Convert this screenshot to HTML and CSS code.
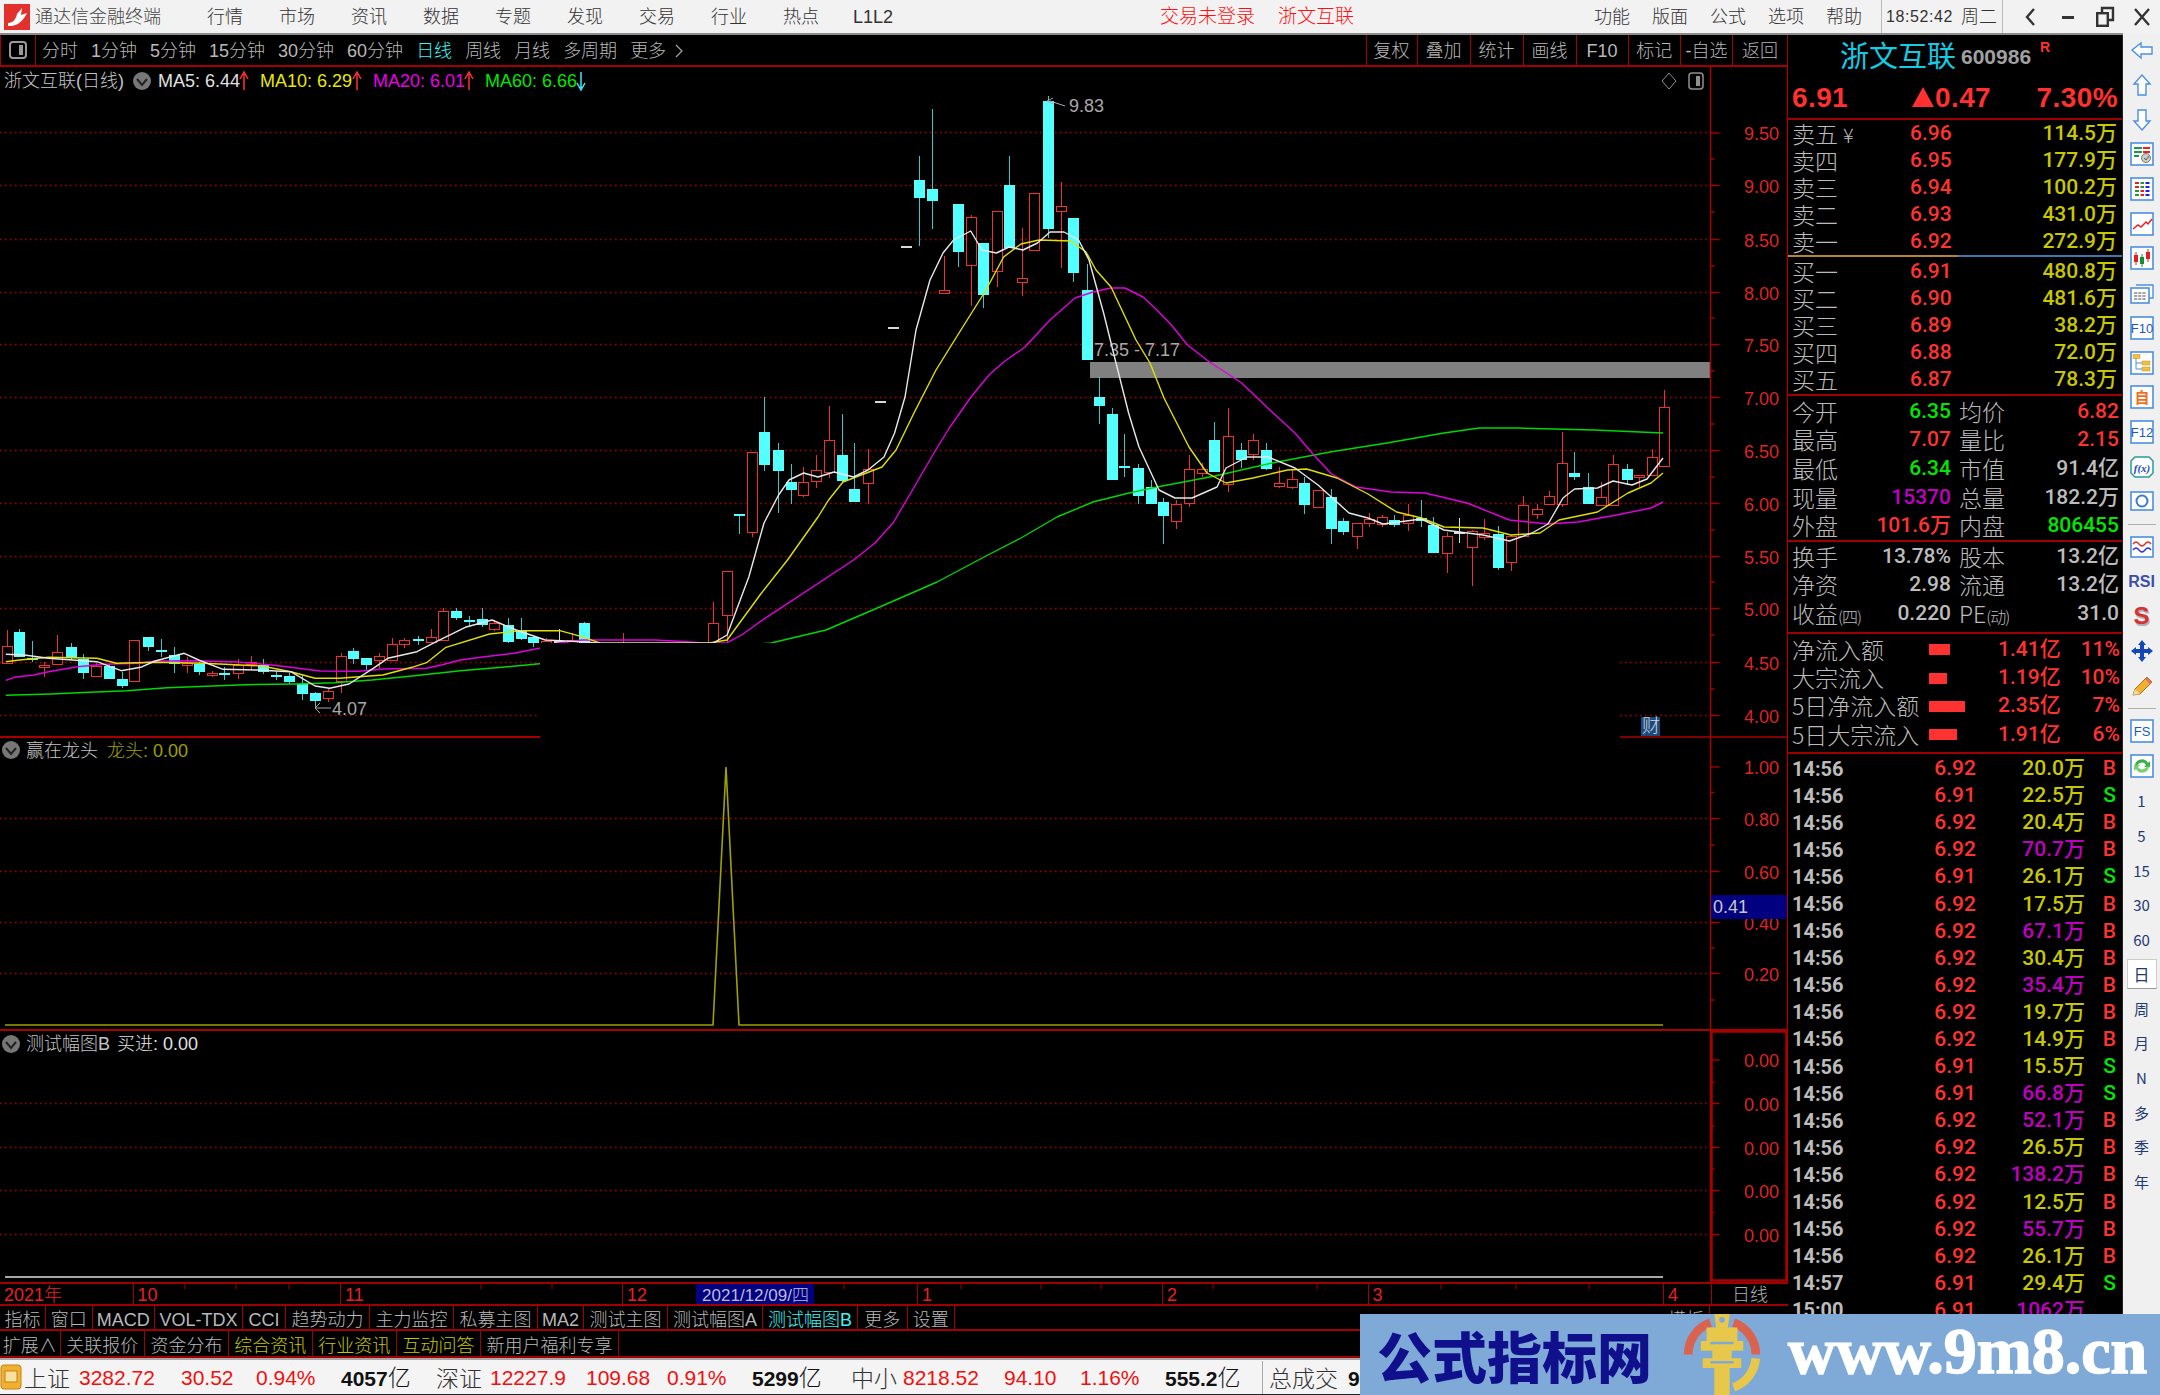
FILE: index.html
```html
<!DOCTYPE html>
<html lang="zh">
<head>
<meta charset="utf-8">
<title>通达信金融终端</title>
<link rel="stylesheet" href="styles.css">
</head>
<body>
<div class="app">
  <header class="titlebar">
    <svg class="logo" viewBox="0 0 26 26"><rect width="26" height="26" fill="#e2302c"/><path d="M4 19 C9 19 12 15 13 10 L18 4 L17 11 L23 9 C19 17 13 23 4 22Z" fill="#fff"/></svg>
    <span class="appname">通达信金融终端</span>
    <nav class="menu"><span>行情</span><span>市场</span><span>资讯</span><span>数据</span><span>专题</span><span>发现</span><span>交易</span><span>行业</span><span>热点</span><span>L1L2</span></nav>
    <span class="warn">交易未登录</span><span class="warn warn2">浙文互联</span>
    <nav class="menu2"><span>功能</span><span>版面</span><span>公式</span><span>选项</span><span>帮助</span></nav>
    <div class="clock"><span class="clocktime">18:52:42</span><span>周二</span></div>
    <div class="winbtns">
      <svg viewBox="0 0 24 24"><path d="M15 4 L8 12 L15 20" fill="none" stroke="#333" stroke-width="2.4"/></svg>
      <svg viewBox="0 0 24 24"><rect x="6" y="11" width="12" height="3" fill="#333"/></svg>
      <svg viewBox="0 0 24 24"><path d="M9 7 V3 H20 V15 H16" fill="none" stroke="#333" stroke-width="2.4"/><rect x="4.2" y="8.2" width="10.6" height="12.6" fill="none" stroke="#333" stroke-width="2.4"/></svg>
      <svg viewBox="0 0 24 24"><path d="M5 4 L19 20 M19 4 L5 20" stroke="#333" stroke-width="2.4"/></svg>
    </div>
  </header>

  <div class="main">
    <section class="left">
      <div class="toolbar">
        <div class="paneltoggle"><svg viewBox="0 0 20 20"><rect x="2" y="2" width="16" height="16" rx="3" fill="none" stroke="#9a9a9a" stroke-width="2"/><rect x="11" y="5" width="4" height="10" fill="#9a9a9a"/></svg></div>
        <nav class="periods"><span>分时</span><span>1分钟</span><span>5分钟</span><span>15分钟</span><span>30分钟</span><span>60分钟</span><span class="on">日线</span><span>周线</span><span>月线</span><span>多周期</span><span>更多</span><svg class="morearrow" viewBox="0 0 8 16"><path d="M1 2 L7 8 L1 14" fill="none" stroke="#a8a8a8" stroke-width="1.2"/></svg></nav>
        <nav class="tools"><span>复权</span><span>叠加</span><span>统计</span><span>画线</span><span>F10</span><span>标记</span><span>-自选</span><span>返回</span></nav>
      </div>

      <svg id="chart" class="chart" viewBox="0 67 1788 1215" xmlns="http://www.w3.org/2000/svg">
        <g id="grid"></g>
        <rect x="1090" y="362" width="620" height="16" fill="#808080"/>
        <text class="t grey" x="1094" y="356">7.35 - 7.17</text>
        <g id="candles"></g>
        <g id="lines"></g>
        <rect x="540" y="643" width="1080" height="98" fill="#000"/>
        <text class="t grey" x="1069" y="112">9.83</text>
        <path d="M1065 106 L1050 101 M1053 98 L1047 101 L1053 104" fill="none" stroke="#a8a8a8"/>
        <text class="t grey" x="332" y="715">4.07</text>
        <path d="M331 708 H315 M320 703 L315 708 L320 713" fill="none" stroke="#a8a8a8"/>

        <g id="frame"></g>
        <text class="t" fill="#c4c4c4" x="4" y="87">浙文互联(日线)</text>
        <circle cx="142" cy="81" r="9" fill="#777"/><path d="M137 79 L142 85 L147 79" fill="none" stroke="#222" stroke-width="2"/>
        <text class="t" fill="#e0e0e0" x="158" y="87">MA5: 6.44</text>
        <path d="M244 90 V74 M240 79 L244 72 L248 79" fill="none" stroke="#ff3030" stroke-width="1.5"/>
        <text class="t" fill="#e8e800" x="260" y="87">MA10: 6.29</text>
        <path d="M357 90 V74 M353 79 L357 72 L361 79" fill="none" stroke="#ff3030" stroke-width="1.5"/>
        <text class="t" fill="#e800e8" x="373" y="87">MA20: 6.01</text>
        <path d="M469 90 V74 M465 79 L469 72 L473 79" fill="none" stroke="#ff3030" stroke-width="1.5"/>
        <text class="t" fill="#00e800" x="485" y="87">MA60: 6.66</text>
        <path d="M581 72 V88 M577 83 L581 90 L585 83" fill="none" stroke="#40e8ff" stroke-width="1.5"/>
        <path d="M1669 73 L1676 81 L1669 89 L1662 81Z" fill="none" stroke="#909090"/>
        <rect x="1689" y="73" width="14" height="16" rx="3" fill="none" stroke="#909090" stroke-width="1.5"/><rect x="1696" y="76" width="4" height="10" fill="#909090"/>

        <rect x="1641" y="717" width="19" height="19" fill="#1a4a80"/>
        <text class="t" fill="#d8d8d8" x="1642" y="732" font-size="17">财</text>

        <circle cx="11" cy="750" r="9" fill="#777"/><path d="M6 748 L11 754 L16 748" fill="none" stroke="#222" stroke-width="2"/>
        <text class="t" fill="#c4c4c4" x="26" y="757">赢在龙头</text>
        <text class="t" fill="#a0a000" x="107" y="757">龙头: 0.00</text>
        <circle cx="11" cy="1044" r="9" fill="#777"/><path d="M6 1042 L11 1048 L16 1042" fill="none" stroke="#222" stroke-width="2"/>
        <text class="t" fill="#c4c4c4" x="26" y="1050">测试幅图B</text>
        <text class="t" fill="#e0e0e0" x="117" y="1050">买进: 0.00</text>

        <g id="axis"></g>
        <rect x="1711" y="895" width="76" height="24" fill="#000080"/>
        <text class="t" fill="#c8c8c8" x="1713" y="913">0.41</text>
      </svg>

      <div class="timeaxis">
        <svg class="timeticks" viewBox="0 0 1710 5"><path d="M185 0v5M236 0v5M289 0v5M481 0v5M552 0v5M844 0v5M961 0v5M1041 0v5M1101 0v5M1213 0v5M1317 0v5M1441 0v5M1516 0v5M1589 0v5" stroke="#a00000"/></svg>
        <span>2021年</span><span>10</span><span>11</span><span>12</span><span class="cursor">2021/12/09/四</span><span class="blank"></span><span>1</span><span>2</span><span>3</span><span>4</span><span class="period">日线</span>
      </div>
      <div class="tabs tabs1"><span>指标</span><span>窗口</span><span>MACD</span><span>VOL-TDX</span><span>CCI</span><span>趋势动力</span><span>主力监控</span><span>私募主图</span><span>MA2</span><span>测试主图</span><span>测试幅图A</span><span class="on">测试幅图B</span><span>更多</span><span>设置</span><span class="blank"></span><span>模板</span><span class="blank"></span></div>
      <div class="tabs tabs2"><span>扩展∧</span><span>关联报价</span><span>资金分布</span><span class="gold">综合资讯</span><span class="gold">行业资讯</span><span class="gold">互动问答</span><span>新用户福利专享</span><span class="blank"></span></div>
    </section>

    <aside class="quote">
      <div class="qhead">
        <div class="qname"><span class="qcn">浙文互联</span><span class="qcode">600986</span><sup class="qr">R</sup></div>
        <div class="qprice"><span>6.91</span><span class="qchg"><i class="tri"></i>0.47</span><span class="qpct">7.30%</span></div>
      </div>
      <div class="book asks">
        <div class="brow"><span class="lab">卖五 <small>¥</small></span><span class="red">6.96</span><span class="yel">114.5万</span></div>
        <div class="brow"><span class="lab">卖四</span><span class="red">6.95</span><span class="yel">177.9万</span></div>
        <div class="brow"><span class="lab">卖三</span><span class="red">6.94</span><span class="yel">100.2万</span></div>
        <div class="brow"><span class="lab">卖二</span><span class="red">6.93</span><span class="yel">431.0万</span></div>
        <div class="brow"><span class="lab">卖一</span><span class="red">6.92</span><span class="yel">272.9万</span></div>
      </div>
      <div class="book bids">
        <div class="brow"><span class="lab">买一</span><span class="red">6.91</span><span class="yel">480.8万</span></div>
        <div class="brow"><span class="lab">买二</span><span class="red">6.90</span><span class="yel">481.6万</span></div>
        <div class="brow"><span class="lab">买三</span><span class="red">6.89</span><span class="yel">38.2万</span></div>
        <div class="brow"><span class="lab">买四</span><span class="red">6.88</span><span class="yel">72.0万</span></div>
        <div class="brow"><span class="lab">买五</span><span class="red">6.87</span><span class="yel">78.3万</span></div>
      </div>
      <div class="stats stats1">
        <div class="srow"><span class="lab">今开</span><span class="grn">6.35</span><span class="lab">均价</span><span class="red">6.82</span></div>
        <div class="srow"><span class="lab">最高</span><span class="red">7.07</span><span class="lab">量比</span><span class="red">2.15</span></div>
        <div class="srow"><span class="lab">最低</span><span class="grn">6.34</span><span class="lab">市值</span><span class="gry">91.4亿</span></div>
        <div class="srow"><span class="lab">现量</span><span class="pur">15370</span><span class="lab">总量</span><span class="gry">182.2万</span></div>
        <div class="srow"><span class="lab">外盘</span><span class="red">101.6万</span><span class="lab">内盘</span><span class="grn">806455</span></div>
      </div>
      <div class="stats stats2">
        <div class="srow"><span class="lab">换手</span><span class="gry">13.78%</span><span class="lab">股本</span><span class="gry">13.2亿</span></div>
        <div class="srow"><span class="lab">净资</span><span class="gry">2.98</span><span class="lab">流通</span><span class="gry">13.2亿</span></div>
        <div class="srow"><span class="lab">收益<small class="paren">(四)</small></span><span class="gry">0.220</span><span class="lab">PE<small class="paren">(动)</small></span><span class="gry">31.0</span></div>
      </div>
      <div class="flow">
        <div class="frow"><span class="lab">净流入额<i class="bar" style="width:21px"></i></span><span class="red">1.41亿</span><span class="red">11%</span></div>
        <div class="frow"><span class="lab">大宗流入<i class="bar" style="width:18px"></i></span><span class="red">1.19亿</span><span class="red">10%</span></div>
        <div class="frow"><span class="lab">5日净流入额<i class="bar" style="width:36px"></i></span><span class="red">2.35亿</span><span class="red">7%</span></div>
        <div class="frow"><span class="lab">5日大宗流入<i class="bar" style="width:28px"></i></span><span class="red">1.91亿</span><span class="red">6%</span></div>
      </div>
      <div class="ticks">
        <div class="trow"><span>14:56</span><span class="red">6.92</span><span class="yel">20.0万</span><span class="red">B</span></div>
        <div class="trow"><span>14:56</span><span class="red">6.91</span><span class="yel">22.5万</span><span class="grn">S</span></div>
        <div class="trow"><span>14:56</span><span class="red">6.92</span><span class="yel">20.4万</span><span class="red">B</span></div>
        <div class="trow"><span>14:56</span><span class="red">6.92</span><span class="pur">70.7万</span><span class="red">B</span></div>
        <div class="trow"><span>14:56</span><span class="red">6.91</span><span class="yel">26.1万</span><span class="grn">S</span></div>
        <div class="trow"><span>14:56</span><span class="red">6.92</span><span class="yel">17.5万</span><span class="red">B</span></div>
        <div class="trow"><span>14:56</span><span class="red">6.92</span><span class="pur">67.1万</span><span class="red">B</span></div>
        <div class="trow"><span>14:56</span><span class="red">6.92</span><span class="yel">30.4万</span><span class="red">B</span></div>
        <div class="trow"><span>14:56</span><span class="red">6.92</span><span class="pur">35.4万</span><span class="red">B</span></div>
        <div class="trow"><span>14:56</span><span class="red">6.92</span><span class="yel">19.7万</span><span class="red">B</span></div>
        <div class="trow"><span>14:56</span><span class="red">6.92</span><span class="yel">14.9万</span><span class="red">B</span></div>
        <div class="trow"><span>14:56</span><span class="red">6.91</span><span class="yel">15.5万</span><span class="grn">S</span></div>
        <div class="trow"><span>14:56</span><span class="red">6.91</span><span class="pur">66.8万</span><span class="grn">S</span></div>
        <div class="trow"><span>14:56</span><span class="red">6.92</span><span class="pur">52.1万</span><span class="red">B</span></div>
        <div class="trow"><span>14:56</span><span class="red">6.92</span><span class="yel">26.5万</span><span class="red">B</span></div>
        <div class="trow"><span>14:56</span><span class="red">6.92</span><span class="pur">138.2万</span><span class="red">B</span></div>
        <div class="trow"><span>14:56</span><span class="red">6.92</span><span class="yel">12.5万</span><span class="red">B</span></div>
        <div class="trow"><span>14:56</span><span class="red">6.92</span><span class="pur">55.7万</span><span class="red">B</span></div>
        <div class="trow"><span>14:56</span><span class="red">6.92</span><span class="yel">26.1万</span><span class="red">B</span></div>
        <div class="trow"><span>14:57</span><span class="red">6.91</span><span class="yel">29.4万</span><span class="grn">S</span></div>
        <div class="trow"><span>15:00</span><span class="red">6.91</span><span class="pur">1062万</span><span></span></div>
      </div>
    </aside>

    <nav class="side">
      <div class="si"><svg viewBox="0 0 24 24"><path d="M2 12 L11 5 V9 H22 V16 H11 V20Z" class="arrow"/></svg></div>
      <div class="si"><svg viewBox="0 0 24 24"><path d="M12 2 L20 11 H16 V22 H8 V11 H4Z" class="arrow"/></svg></div>
      <div class="si"><svg viewBox="0 0 24 24"><path d="M12 22 L20 13 H16 V2 H8 V13 H4Z" class="arrow"/></svg></div>
      <div class="si"><svg viewBox="0 0 24 24"><rect x="1" y="1" width="22" height="22" class="bx"/><path d="M4 6H12M4 10H12M4 14H9" stroke="#1a9a3a" stroke-width="2"/><path d="M13 6H20M13 10H20" stroke="#e82020" stroke-width="2"/><circle cx="16" cy="16" r="4.5" fill="#ccc" stroke="#777"/><path d="M14 16l2 2 3-4" fill="none" stroke="#555"/></svg></div>
      <div class="si"><svg viewBox="0 0 24 24"><rect x="1" y="1" width="22" height="22" class="bx"/><path d="M5 6H9M5 10H9" stroke="#e82020" stroke-width="2" /><path d="M5 14H9M5 18H9" stroke="#1a9a3a" stroke-width="2"/><path d="M10.5 6H14M10.5 10H14" stroke="#1a9a3a" stroke-width="2"/><path d="M10.5 14H14M10.5 18H14" stroke="#e82020" stroke-width="2"/><path d="M15.5 6H19.5M15.5 10H19.5M15.5 14H19.5M15.5 18H19.5" stroke="#2020e0" stroke-width="2"/></svg></div>
      <div class="si"><svg viewBox="0 0 24 24"><rect x="1" y="1" width="22" height="22" class="bx"/><path d="M3 17 L8 13 L11 15 L16 10 L18 12 L22 7" fill="none" stroke="#e82020" stroke-width="1.5"/></svg></div>
      <div class="si"><svg viewBox="0 0 24 24"><rect x="1" y="1" width="22" height="22" class="bx"/><path d="M6 6V19" stroke="#e02020"/><rect x="4" y="9" width="4" height="7" fill="#e02020"/><path d="M12 8V21" stroke="#109030"/><rect x="10" y="11" width="4" height="7" fill="#109030"/><path d="M18 3V16" stroke="#e02020"/><rect x="16" y="6" width="4" height="7" fill="#e02020"/></svg></div>
      <div class="si"><svg viewBox="0 0 24 24"><path d="M6 4H23V17H19" fill="#fff" stroke="#4a90e2" stroke-width="1.4"/><rect x="1" y="7" width="18" height="15" class="bx"/><path d="M4 12H16M4 15H16M4 18H16" stroke="#888" stroke-width="1.4" stroke-dasharray="3.2 1"/></svg></div>
      <div class="si"><svg viewBox="0 0 24 24"><rect x="1" y="1" width="22" height="22" class="bx"/><text x="12" y="17" class="bt">F10</text></svg></div>
      <div class="si"><svg viewBox="0 0 24 24"><rect x="1" y="1" width="22" height="22" class="bx"/><path d="M6 6V18H12M6 12H12" fill="none" stroke="#4a90e2"/><rect x="3" y="3.5" width="7" height="4" fill="#f0c040" stroke="#c89020" stroke-width=".5"/><rect x="12" y="10" width="8" height="4" fill="#f0c040" stroke="#c89020" stroke-width=".5"/><rect x="12" y="16" width="8" height="4" fill="#f0c040" stroke="#c89020" stroke-width=".5"/></svg></div>
      <div class="si"><svg viewBox="0 0 24 24"><rect x="1" y="1" width="22" height="22" class="bx"/><text x="12" y="18" class="ot">自</text></svg></div>
      <div class="si"><svg viewBox="0 0 24 24"><rect x="1" y="1" width="22" height="22" class="bx"/><text x="12" y="17" class="bt">F12</text></svg></div>
      <div class="si"><svg viewBox="0 0 24 24"><path d="M5 2H19L23 6V18L19 22H5L1 18V6Z" fill="#fff" stroke="#2a9a9a" stroke-width="1.5"/><text x="12" y="17" class="fx">f(x)</text></svg></div>
      <div class="si"><svg viewBox="0 0 24 24"><rect x="1" y="3" width="22" height="18" class="bx"/><circle cx="12" cy="12" r="5.5" fill="none" stroke="#3a7ad0" stroke-width="2"/></svg></div>
      <div class="sidesep"></div>
      <div class="si"><svg viewBox="0 0 24 24"><rect x="1" y="2" width="22" height="20" class="bx"/><path d="M3 9 Q6 5 9 9 T15 9 T21 9" fill="none" stroke="#e03030" stroke-width="1.3"/><path d="M3 15 Q6 11 9 15 T15 15 T21 15" fill="none" stroke="#3030e0" stroke-width="1.3"/></svg></div>
      <div class="si rsi">RSI</div>
      <div class="si dollar">S</div>
      <div class="si"><svg viewBox="0 0 24 24"><path d="M12 1 L16 6 H14 V10 H18 V8 L23 12 L18 16 V14 H14 V18 H16 L12 23 L8 18 H10 V14 H6 V16 L1 12 L6 8 V10 H10 V6 H8Z" fill="#1446b8"/></svg></div>
      <div class="si"><svg viewBox="0 0 24 24"><path d="M3 21 L5 15 L17 3 L22 8 L10 20Z" fill="#f0b030" stroke="#a87018"/><path d="M17 3 L22 8 L20 10 L15 5Z" fill="#e07060"/><path d="M3 21 L5 15 L10 20Z" fill="#f0d8a8"/></svg></div>
      <div class="sidesep"></div>
      <div class="si"><svg viewBox="0 0 24 24"><rect x="1" y="1" width="22" height="22" class="bx"/><text x="12" y="17" class="bt">FS</text></svg></div>
      <div class="si"><svg viewBox="0 0 24 24"><rect x="1" y="1" width="22" height="22" class="bx"/><path d="M5 11 A7 7 0 0 1 18 9 L20 7 V13 H14 L16 11 A5 5 0 0 0 7 12Z" fill="#3ab04a"/><path d="M19 13 A7 7 0 0 1 6 15 L4 17 V11 H10 L8 13 A5 5 0 0 0 17 12Z" fill="#7ad070"/></svg></div>
      <div class="si tx">1</div>
      <div class="si tx">5</div>
      <div class="si tx">15</div>
      <div class="si tx">30</div>
      <div class="si tx">60</div>
      <div class="si tx sel">日</div>
      <div class="si tx">周</div>
      <div class="si tx">月</div>
      <div class="si tx">N</div>
      <div class="si tx">多</div>
      <div class="si tx">季</div>
      <div class="si tx">年</div>
    </nav>
  </div>

  <footer class="status">
    <svg class="sticon" viewBox="0 0 22 26"><rect x="1" y="1" width="20" height="24" rx="3" fill="#f0b030" stroke="#c88010"/><rect x="5" y="7" width="12" height="11" fill="#f8e0a0" stroke="#c88010"/></svg>
    <span class="cn">上证</span><span class="up">3282.72</span><span class="up">30.52</span><span class="up">0.94%</span><span class="amt"><b>4057</b>亿</span>
    <span class="cn">深证</span><span class="up">12227.9</span><span class="up">109.68</span><span class="up">0.91%</span><span class="amt"><b>5299</b>亿</span>
    <span class="cn">中小</span><span class="up">8218.52</span><span class="up">94.10</span><span class="up">1.16%</span><span class="amt"><b>555.2</b>亿</span>
    <span class="cn total">总成交</span><span class="amt"><b>9</b></span>
  </footer>

  <div class="watermark">
    <span class="wmcn">公式指标网</span>
    <svg class="wmlogo" viewBox="0 0 84 84"><path d="M7 42 A35 35 0 0 1 30 9" fill="none" stroke="#d9634f" stroke-width="9"/><path d="M54 9 A35 35 0 0 1 77 42" fill="none" stroke="#d9634f" stroke-width="9"/><path d="M77 46 A35 35 0 0 1 54 76" fill="none" stroke="#e8c84a" stroke-width="9"/><path d="M34 0 H50 L48 14 H58 V28 H64 V38 H52 V46 H62 V56 H50 V84 H34 V56 H22 V46 H32 V38 H20 V28 H26 V14 H36Z" fill="#e8c84a"/><circle cx="42" cy="6" r="3" fill="#7faad8"/><path d="M30 30H54M30 50H54" stroke="#7faad8" stroke-width="2.5"/></svg>
    <span class="wmurl">www.9m8.cn</span>
  </div>
</div>
<script src="chart.js"></script>
</body>
</html>
```

FILE: styles.css
```css
* { box-sizing: border-box; }
html, body { margin: 0; height: 100%; background: #000; overflow: hidden; }
body { font-family: "Liberation Sans", "Noto Sans CJK SC", sans-serif; }

.app { position: relative; width: 2160px; height: 1395px; display: flex; flex-direction: column; background: #000; overflow: hidden; }

/* Title bar */
.titlebar { height: 35px; display: flex; align-items: center; background: #f2f2f2; color: #333; font-size: 18px; line-height: 1; border-bottom: 2px solid #8c8c8c; flex: none; }
.logo { width: 26px; height: 26px; margin-left: 4px; flex: none; }
.appname { margin-left: 5px; width: 154px; font-size: 18px; color: #444; font-weight: 300; }
.menu { display: grid; grid-template-columns: repeat(10, 72px); align-items: center; text-align: center; }
.menu span, .menu2 span { font-weight: 300; }
.warn { color: #ff1010; font-size: 19px; font-weight: 300; margin-left: 251px; }
.warn2 { margin-left: 23px; }
.menu2 { margin-left: auto; display: flex; gap: 22px; }
.clock { display: flex; align-items: center; gap: 8px; height: 100%; margin-left: 19px; padding: 0 5px 0 4px; border-left: 1px solid #bbb; border-right: 1px solid #bbb; font-weight: 300; }
.clocktime { font-size: 16px; letter-spacing: .6px; }
.winbtns { display: flex; gap: 13px; padding: 0 6px 0 16px; }
.winbtns svg { width: 24px; height: 24px; }

/* Main area */
.main { flex: 1; display: flex; min-height: 0; }
.left { width: 1788px; flex: none; display: flex; flex-direction: column; }

.toolbar { height: 32px; flex: none; display: flex; align-items: stretch; border-bottom: 2px solid #a00000; color: #b8b8b8; font-size: 18px; font-weight: 300; }
.paneltoggle { width: 36px; border-left: 1px solid #a00000; border-right: 1px solid #a00000; display: flex; align-items: center; justify-content: center; }
.paneltoggle svg { width: 20px; height: 20px; }
.periods { display: flex; align-items: center; gap: 13px; margin-left: 6px; padding-top: 2px; line-height: 1; }
.periods .on { color: #3cf4f4; }
.morearrow { width: 8px; height: 16px; margin-left: -4px; }
.tools { margin-left: auto; display: grid; grid-template-columns: 50px 53px 53px 53px 52px 52.5px 52px 55px; height: 100%; border-right: 1px solid #a00000; border-left: 1px solid #a00000; line-height: 1; }
.tools span { display: flex; align-items: center; justify-content: center; padding-top: 2px; border-left: 1px solid #a00000; }
.tools span:first-child { border-left: 0; }

.chart { width: 1788px; height: 1215px; flex: none; display: block; }
.chart .t { font: 300 18px "Liberation Sans", "Noto Sans CJK SC", sans-serif; }
.chart .grey { fill: #a8a8a8; }
.chart .ax { fill: #dd2424; font: 18px "Liberation Sans", sans-serif; }

.timeaxis { position: relative; height: 24px; flex: none; display: grid; grid-template-columns: 132.5px 207.5px 282px 74px 118px 103px 245px 205.5px 295.5px 47.5px 78px; border-top: 2px solid #a00000; border-bottom: 2px solid #a00000; color: #e82020; font-size: 18px; font-weight: 300; }
.timeaxis span { padding-left: 4px; line-height: 23px; height: 20px; border-left: 1px solid #a00000; }
.timeaxis span:first-of-type { border-left: 0; }
.timeaxis .cursor { background: #000080; color: #bcbcd8; padding-left: 1px; font-size: 17px; text-align: center; border-left: 0; }
.timeaxis .blank { border-left: 0; }
.timeaxis .period { color: #b0b0b0; text-align: center; padding: 0; }
.timeticks { position: absolute; left: 0; top: 0; width: 1710px; height: 5px; }

.tabs { flex: none; display: grid; color: #b8b8b8; font-size: 18px; font-weight: 300; line-height: 1; border-bottom: 2px solid #a00000; }
.tabs span { display: flex; align-items: center; justify-content: center; padding-top: 4px; border-right: 1px solid #a00000; white-space: nowrap; }
.tabs .blank { border-right: 0; }
.tabs1 { height: 25px; grid-template-columns: 46px 46.5px 62.5px 88px 43px 84px 84px 84px 46px 84px 95px 95px 49.5px 47.5px 708px 47px 1fr; }
.tabs2 { height: 27px; grid-template-columns: 60.5px 84.5px 84px 83.5px 84.5px 84px 138px 1fr; }
.tabs1 .on { color: #3cf4f4; }
.tabs2 .gold { color: #c8c800; }

/* Quote panel */
.quote { width: 335px; flex: none; display: flex; flex-direction: column; height: 1321px; overflow: hidden; border-right: 1px solid #222; color: #bcbcbc; font-size: 21px; line-height: 1; font-weight: 500; font-family: "Roboto", "Noto Sans CJK SC", sans-serif; }
.qhead { height: 85px; flex: none; border-bottom: 2px solid #a00000; padding: 0 4px; }
.qname { height: 38px; display: flex; align-items: center; padding-left: 48px; position: relative; }
.qcn { color: #14cbe4; font: 400 29px/1 "Noto Sans CJK SC", sans-serif; }
.qcode { margin: 5px 0 0 5px; color: #a0a0a0; font: 700 21px/1 "Liberation Sans", sans-serif; }
.qr { position: absolute; left: 248px; top: 5px; color: #ff3030; font: 700 14px/1 "Liberation Sans", sans-serif; margin: 0; }
.qprice { display: grid; grid-template-columns: 120px 123px 1fr; margin-top: 9px; color: #ff3030; font: 700 28px/32px "Liberation Sans", sans-serif; letter-spacing: .4px; }
.qpct { text-align: right; }
.tri { display: inline-block; width: 0; height: 0; border-left: 11px solid transparent; border-right: 11px solid transparent; border-bottom: 20px solid #ff3030; margin-right: 1px; }

.book { height: 136px; flex: none; padding: 0 5px 0 4px; }
.asks { border-bottom: 2px solid; border-image: linear-gradient(90deg, #b8862a 0, #b8862a 51%, #3a78b0 51%, #3a78b0 100%) 1; height: 137px; }
.bids { height: 139px; border-bottom: 2px solid #a00000; padding-top: 1px; }
.brow { height: 27px; display: grid; grid-template-columns: 118px 1fr auto; grid-template-rows: 27px; align-items: center; white-space: nowrap; }
.lab { color: #bcbcbc; font: 300 23px/1 "Noto Sans CJK SC", sans-serif; white-space: nowrap; }
.lab small { font-size: 20px; }
small.paren { font-size: 16px; letter-spacing: -1px; }
.red { color: #ff3232; }
.yel { color: #c8c800; }
.grn { color: #00e800; }
.pur { color: #c000c0; }
.gry { color: #bcbcbc; }

.stats { flex: none; padding: 0 3px 0 4px; border-bottom: 2px solid #a00000; }
.stats1 { height: 146px; padding-top: 1px; }
.stats2 { height: 92px; }
.srow { height: 28.6px; display: grid; grid-template-columns: 52px 107px 8px 60px 1fr; grid-template-rows: 28.6px; align-items: center; white-space: nowrap; }
.srow > span:nth-child(2) { text-align: right; }
.srow > span:nth-child(3) { grid-column: 4; }
.srow > span:nth-child(4) { grid-column: 5; text-align: right; }

.flow { height: 120px; flex: none; padding: 1px 2px 0 4px; border-bottom: 2px solid #a00000; }
.frow { height: 28.4px; display: grid; grid-template-columns: 206px 60px 1fr; grid-template-rows: 28.4px; align-items: center; text-align: right; white-space: nowrap; }
.frow .lab { text-align: left; position: relative; }
.bar { position: absolute; left: 137px; top: 50%; height: 11px; margin-top: -5px; background: #ff3232; }

.ticks { padding: 1px 6px 0 4px; font-weight: 500; }
.trow { height: 27.1px; display: grid; grid-template-columns: 100px 84px 109px 1fr; grid-template-rows: 27.1px; align-items: center; text-align: right; white-space: nowrap; }
.trow > span:first-child { text-align: left; color: #bcbcbc; font-weight: 700; font-size: 20px; }

/* Sidebar */
.side { flex: 1; background: #f0f0f0; display: flex; flex-direction: column; align-items: center; margin-top: -2px; position: relative; }
.si { width: 100%; height: 34.7px; flex: none; display: flex; align-items: center; justify-content: center; }
.si svg { width: 24px; height: 24px; }
.sidesep { width: 28px; height: 11px; flex: none; position: relative; }
.sidesep::after { content: ""; position: absolute; left: 0; right: 0; top: 5px; height: 1px; background: #b0b0b0; }
.arrow { fill: #fff; stroke: #4a90e2; stroke-width: 1.4; }
.bx { fill: #fff; stroke: #4a90e2; stroke-width: 1.6; }
.bt { font: 13px "Liberation Sans", sans-serif; fill: #1a5ac0; text-anchor: middle; }
.ot { font: 700 15px "Noto Sans CJK SC", sans-serif; fill: #f07020; text-anchor: middle; }
.fx { font: italic 700 11px "Liberation Serif", serif; fill: #1a4ac0; text-anchor: middle; }
.rsi { color: #3a50a8; font: 700 16px "Liberation Sans", sans-serif; }
.dollar { color: #d83030; font: 700 24px "Liberation Sans", sans-serif; text-shadow: 1px 2px 1px #aaa; }
.tx { color: #1e3a70; font: 400 15px/1 "Noto Sans CJK SC", sans-serif; }
.tx.sel { font-size: 16px; background: #fff; border: 1px solid #ccc; border-bottom-color: #999; width: 30px; height: 30px; margin: 2px 0; }

/* Status bar */
.status { height: 37px; flex: none; display: grid; grid-template-columns: 24px 55px 102px 75px 85px 95px 54px 96px 81px 85px 99px 52px 101px 76px 85px 97px 86px 1fr; align-items: center; background: #f4f4f4; border-top: 2px solid #a8a8a8; border-bottom: 1px solid #223; color: #111; font-size: 21px; line-height: 1; white-space: nowrap; }
.sticon { width: 22px; height: 26px; }
.status .cn { font: 300 23px/1 "Noto Sans CJK SC", sans-serif; color: #333; }
.status .up { color: #f01010; }
.status .amt { color: #111; font: 300 23px/1 "Noto Sans CJK SC", sans-serif; }
.status .amt b { font: 700 21px/1 "Liberation Sans", sans-serif; }
.status .total { border-left: 1px solid #aaa; padding-left: 6px; line-height: 33px; }

/* Watermark overlay */
.watermark { position: absolute; left: 1360px; top: 1314px; width: 800px; height: 81px; background: #7faad8; display: flex; align-items: center; }
.wmcn { margin-left: 17px; width: 303px; color: #10108c; font: 900 55px/1 "Noto Sans CJK SC", sans-serif; white-space: nowrap; }
.wmlogo { width: 84px; height: 81px; flex: none; }
.wmurl { margin-left: 24px; margin-top: -8px; color: #fff; font: 700 66px/1 "Liberation Serif", serif; -webkit-text-stroke: 1.5px #fff; white-space: nowrap; }
```

FILE: chart.js
```js
(function () {
  var NS = 'http://www.w3.org/2000/svg';
  function el(parent, tag, attrs, text) {
    var n = document.createElementNS(NS, tag);
    for (var k in attrs) n.setAttribute(k, attrs[k]);
    if (text) n.textContent = text;
    parent.appendChild(n);
    return n;
  }
  var grid = document.getElementById('grid');
  var candles = document.getElementById('candles');
  var lines = document.getElementById('lines');
  var frame = document.getElementById('frame');
  var axis = document.getElementById('axis');
  var AX = 1710.5;

  // dotted grid lines
  [132.5,185.5,239.5,292.5,344.5,397.5,450.5,503.5,556.5,608.5,662.5,715.5,818.5,871.5,922.5,973.5,1103.5,1147.5,1190.5,1234.5].forEach(function (y) {
    el(grid, 'line', { x1: 0, x2: AX, y1: y, y2: y, stroke: '#a00000', 'stroke-width': 1.4, 'stroke-dasharray': '1.6 3.4' });
  });

  // candles: [x, type, bodyTop, bodyBottom, wickTop, wickBottom]
  var sets = [
    { ox: 0, sx: 2.063, oy: 560, d: [
      [14,'r',257,308,210,308],[39,'c',216,290,207,290],[65,'c',293,296,243,305],[90,'r',316,318,305,350],[118,'r',276,313,225,313],[146,'c',261,294,250,300],[172,'c',296,340,283,358],[199,'r',317,349,310,349],[224,'c',317,358,313,358],[252,'c',358,377,335,383],[277,'r',239,362,239,362],[305,'c',230,260,230,273],[332,'c',269,272,238,290],[358,'c',285,312,262,340],[385,'r',310,315,292,340],[410,'c',312,336,305,345],[437,'r',338,344,333,350],[462,'c',338,343,320,360],[490,'r',316,340,298,358],[518,'r',307,310,288,330],[543,'c',314,335,297,342],[569,'c',344,348,332,360],[596,'c',347,367,340,373],[623,'c',373,402,345,420],[649,'c',400,422,397,440],[676,'r',392,415,388,425],[703,'r',289,362,280,398],[729,'c',274,296,265,312],[756,'c',293,314,293,330],[782,'r',289,300,278,325],[809,'r',252,300,234,300],[834,'r',239,253,235,265],[862,'c',238,244,228,255],[889,'r',230,245,206,245],[914,'r',153,241,145,241],[941,'c',152,175,145,180],[967,'c',180,183,167,200],[994,'c',176,194,143,202],[1020,'r',190,208,180,212],[1047,'c',194,246,175,250],[1075,'c',212,238,175,240],[1100,'c',230,250,225,260],[1127,'r',243,260,235,260],[1153,'w',243,245,207,260],[1180,'r',240,260,220,260],[1205,'c',188,270,185,270],[1285,'r',248,260,220,260],[1471,'r',190,300,125,320],[1499,'r',32,164,32,250]
    ]},
    { ox: 700, sx: 2.8, oy: 80, d: [
      [108,'c',1302,1303,1302,1362],[146,'r',1116,1357,1116,1370],[180,'c',1057,1155,950,1173],[217,'c',1111,1173,1088,1298],[255,'c',1205,1231,1151,1272],[289,'r',1207,1245,1160,1250],[326,'r',1171,1203,1125,1223],[360,'r',1081,1175,977,1195],[398,'c',1125,1203,1003,1205],[432,'c',1228,1267,1088,1267],[469,'r',1166,1208,1106,1272],[505,'w',963,965,963,965],[540,'w',742,744,742,744],[577,'w',499,501,499,501],[612,'c',300,353,228,498],[650,'c',327,363,88,448],[683,'r',630,640,527,640],[721,'c',373,516,373,560],[760,'r',410,555,405,678],[793,'c',490,646,490,683],[831,'r',392,573,392,620],[864,'c',314,505,228,505],[902,'r',594,605,445,647],[935,'r',338,510,338,510],[973,'c',62,448,48,475],[1011,'r',378,392,305,565],[1045,'c',413,578,413,606],[1083,'c',629,840,553,840],[1116,'c',950,979,890,1033],[1154,'c',1003,1199,985,1199],[1187,'c',1157,1163,1061,1192],[1225,'c',1165,1249,1151,1272],[1263,'c',1220,1272,1200,1272],[1297,'c',1265,1307,1255,1393],[1334,'r',1273,1324,1260,1348],[1368,'r',1166,1270,1125,1280],[1406,'r',1166,1180,1148,1190],[1439,'c',1079,1177,1025,1177],[1477,'r',1067,1211,985,1235],[1515,'c',1111,1141,1088,1165],[1549,'r',1081,1123,1061,1140]
    ]},
    { ox: 1100, sx: 2.613, oy: 370, d: [
      [435,'c',241,298,218,300],[467,'r',340,348,292,355],[502,'r',328,352,300,357],[534,'c',340,405,320,432],[569,'r',360,410,360,410],[603,'c',380,478,358,522],[636,'c',453,487,445,496],[671,'r',458,499,458,536],[703,'r',447,459,430,472],[738,'r',440,463,435,472],[769,'c',450,465,435,472],[804,'r',435,459,403,482],[838,'c',445,452,390,472],[871,'c',465,550,440,550],[906,'r',498,549,485,608],[938,'w',487,491,443,518],[973,'r',482,530,480,648],[1004,'r',490,502,448,510],[1039,'c',493,595,467,600],[1075,'r',497,576,495,603],[1106,'r',404,497,378,497],[1141,'r',418,431,403,447],[1173,'r',378,401,363,401],[1208,'r',278,403,187,410],[1239,'c',309,320,245,330],[1275,'c',350,402,308,402],[1310,'r',382,405,335,405],[1341,'r',283,405,255,405],[1377,'c',296,330,282,345],[1408,'r',315,320,315,352],[1442,'r',260,315,237,318],[1475,'r',112,288,60,288]
    ]}
  ];
  var RED = '#f03030', CY = '#54ffff', CYW = '#38c8c8', WH = '#d8d8d8';
  sets.forEach(function (s) {
    s.d.forEach(function (c) {
      var x = Math.round(s.ox + c[0] / s.sx) + 0.5;
      var y = function (v) { return Math.round(s.oy + v / 3); };
      var top = y(c[2]), bot = y(c[3]), wt = y(c[4]), wb = y(c[5]);
      var wickCol = c[1] === 'r' ? RED : c[1] === 'c' ? CYW : WH;
      if (wt < wb) el(candles, 'line', { x1: x, x2: x, y1: wt, y2: wb, stroke: wickCol, 'stroke-width': 1.4, 'shape-rendering': 'crispEdges' });
      if (c[1] === 'r') {
        el(candles, 'rect', { x: x - 5, y: top + 0.5, width: 10, height: Math.max(bot - top, 2), fill: '#000', stroke: RED, 'stroke-width': 1.4, 'shape-rendering': 'crispEdges' });
      } else {
        el(candles, 'rect', { x: x - 5.5, y: top, width: 11, height: Math.max(bot - top, 2), fill: c[1] === 'c' ? CY : WH, 'shape-rendering': 'crispEdges' });
      }
    });
  });

  // moving averages
  function z8(a) { return a.map(function (p) { return [p[0] / 2.063, 560 + p[1] / 3]; }); }
  function line(pts, col, w) {
    el(lines, 'polyline', { points: pts.map(function (p) { return p[0].toFixed(1) + ',' + p[1].toFixed(1); }).join(' '), fill: 'none', stroke: col, 'stroke-width': w || 1.4, 'stroke-linejoin': 'round' });
  }
  line(z8([[12,406],[105,402],[185,397],[262,392],[345,383],[425,379],[505,374],[610,372],[690,368],[767,360],[850,348],[950,332],[1035,322],[1113,311]]).concat([[771,643],[826,630],[882,606],[937,582],[986,556],[1021,538],[1057,517],[1093,502],[1129,493],[1157,487],[1215,476],[1272,463],[1330,452],[1387,443],[1444,433],[1479,428],[1517,428],[1594,430],[1663,433]]), '#00d800');
  line(z8([[12,361],[30,352],[70,345],[100,335],[130,328],[160,320],[215,313],[290,310],[320,303],[400,302],[490,306],[560,315],[600,322],[660,333],[740,334],[790,327],[880,325],[910,315],[950,300],[1000,290],[1060,280],[1113,265],[1150,250],[1200,240],[1350,240],[1400,244],[1460,250],[1500,248],[1530,225],[1568,185]]).concat([[853.6,560],[875,543],[893,523],[910.7,493],[935.7,450],[950,427],[971,397],[989,375],[1003.6,362],[1025,347],[1050,320],[1075,298],[1093,292],[1110.7,288],[1125,288],[1143,297],[1157,310],[1171.4,325],[1187.5,345],[1210.7,363],[1222,370],[1241.6,383],[1272,412],[1295,433],[1312,453],[1331.5,474],[1356,487],[1391,492],[1425,493],[1467,503],[1509.5,520],[1548,524],[1578,522],[1616.6,515],[1651,508],[1663,502]]), '#e000e0');
  line(z8([[12,305],[40,300],[100,292],[200,295],[240,310],[320,307],[420,310],[540,318],[600,335],[650,355],[700,355],[790,345],[850,322],[880,308],[920,262],[1010,222],[1075,212],[1155,212],[1200,230],[1240,250],[1460,250],[1500,240]]).concat([[760,595],[787.5,560],[818,517],[828.6,500],[843,482],[882,467],[896,450],[914,413],[936,370],[959,333],[986,290],[1003.6,257],[1021,244],[1039,240],[1071,241],[1086,252],[1096,270],[1111,287],[1136,340],[1150,363],[1164,398],[1189,447],[1207,473],[1226,483],[1253,478],[1287.5,470],[1306.6,469],[1337,478],[1368,494],[1396.6,512],[1421.5,518],[1444,527],[1483,528],[1511,535],[1540,533],[1559,520],[1597.5,512],[1628,493],[1651,483],[1663,473]]), '#e0e000');
  line(z8([[12,283],[50,285],[100,295],[200,305],[250,332],[290,322],[320,303],[380,280],[410,300],[460,328],[530,330],[600,335],[650,378],[680,385],[720,372],[770,325],[800,295],[860,275],[900,245],[960,202],[1015,180],[1065,210],[1125,240],[1200,245],[1240,250],[1470,250],[1500,225],[1545,50]]).concat([[753.6,560],[764,523],[778.6,495],[789,480],[803.6,473],[818,477],[834,472],[853.6,477],[868,470],[884,457],[894.6,433],[905,397],[916,330],[930,280],[943,253],[953.6,240],[970.7,231],[982,250],[996.4,253],[1009,247],[1023,250],[1037.5,243],[1050,232],[1064,232],[1078.6,240],[1089,260],[1103.6,313],[1116,363],[1128.6,413],[1139,447],[1159,490],[1175,498],[1192,498],[1217,487],[1226,468],[1247,457],[1268,457],[1295,468],[1318,485],[1349,513],[1368,518],[1383,524],[1421.5,519],[1444,530],[1483,535],[1509.5,541],[1532,533],[1548,524],[1563,498],[1574.5,489],[1597.5,488],[1613,481],[1632,485],[1647,479],[1663,458]]), '#e8e8e8');

  // frame lines and indicator traces
  var F = '#a80000';
  function fl(x1, y1, x2, y2, w) { el(frame, 'line', { x1: x1, y1: y1, x2: x2, y2: y2, stroke: F, 'stroke-width': w || 1.5 }); }
  fl(0, 737, 540, 737, 2);
  fl(1620, 737, 1787, 737, 1.5);
  fl(0, 1030, 1787, 1030, 2);
  fl(AX, 67, AX, 1282, 1.5);
  fl(1787.5, 67, 1787.5, 1282, 1.5);
  el(frame, 'rect', { x: 1711.5, y: 1031.5, width: 75, height: 249, fill: 'none', stroke: F, 'stroke-width': 2.5 });
  el(frame, 'polyline', { points: '5,1025 713,1025 726,767 739,1025 1663,1025', fill: 'none', stroke: '#a0a000', 'stroke-width': 1.6 });
  el(frame, 'line', { x1: 5, y1: 1277, x2: 1663, y2: 1277, stroke: '#e0e0e0', 'stroke-width': 1.6 });

  // price scales
  function tick(y, len) { el(axis, 'line', { x1: AX, x2: AX + len, y1: y, y2: y, stroke: F, 'stroke-width': 1.4 }); }
  function lab(y, s) { el(axis, 'text', { x: 1744, y: y + 7, 'class': 'ax' }, s); tick(y, 9); }
  [['9.50',133],['9.00',185.5],['8.50',239.5],['8.00',292.5],['7.50',344.5],['7.00',397.5],['6.50',450.5],['6.00',503.5],['5.50',556.5],['5.00',608.5],['4.50',662.5],['4.00',715.5],['1.00',767],['0.80',818.5],['0.60',871.5],['0.40',922.5],['0.20',973.5],['0.00',1060],['0.00',1103.5],['0.00',1147.5],['0.00',1190.5],['0.00',1234.5]].forEach(function (a) { lab(a[1], a[0]); });
  [159,212,266,318,371,424,477,530,582,635,689,792.5,845,948,1000,1082.5,1126,1169,1212.5].forEach(function (y) { tick(y, 4); });
})();
```
